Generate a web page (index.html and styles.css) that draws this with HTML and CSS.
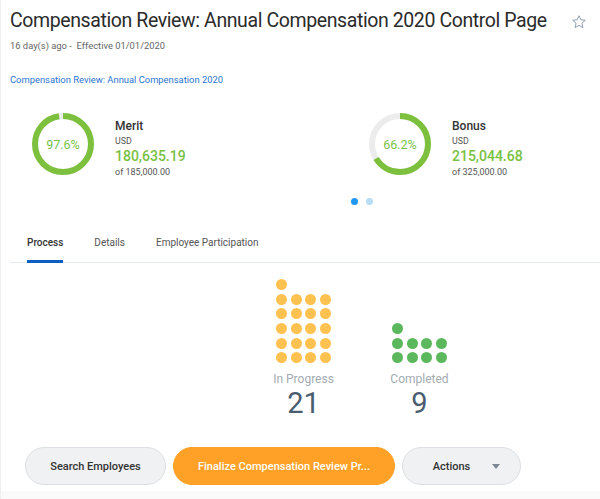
FILE: index.html
```html
<!DOCTYPE html>
<html lang="en">
<head>
<meta charset="utf-8">
<title>Compensation Review: Annual Compensation 2020 Control Page</title>
<link rel="stylesheet" href="styles.css">
</head>
<body>
<div class="page">
  <header class="head">
    <h1 class="title">Compensation Review: Annual Compensation 2020 Control Page</h1>
    <svg class="star" viewBox="0 0 24 24" width="16" height="16" aria-label="Favorite">
      <path d="M12 2.6l2.75 6.06 6.62.68-4.95 4.46 1.4 6.52L12 17l-5.82 3.32 1.4-6.52-4.95-4.46 6.62-.68z" fill="none" stroke="#8797a8" stroke-width="1.4" stroke-linejoin="round"/>
    </svg>
  </header>
  <p class="meta">16 day(s) ago -&nbsp; Effective 01/01/2020</p>
  <a class="link" href="#">Compensation Review: Annual Compensation 2020</a>

  <section class="summary">
    <div class="card">
      <div class="ring">
        <svg viewBox="0 0 62 62" width="62" height="62">
          <circle cx="31" cy="31" r="28" class="track"/>
          <circle cx="31" cy="31" r="28" class="bar" stroke-dasharray="171.7 175.9"/>
        </svg>
        <span class="pct">97.6%</span>
      </div>
      <div class="info">
        <div class="name">Merit</div>
        <div class="cur">USD</div>
        <div class="amt">180,635.19</div>
        <div class="of">of 185,000.00</div>
      </div>
    </div>
    <div class="card">
      <div class="ring">
        <svg viewBox="0 0 62 62" width="62" height="62">
          <circle cx="31" cy="31" r="28" class="track"/>
          <circle cx="31" cy="31" r="28" class="bar" stroke-dasharray="116.5 175.9"/>
        </svg>
        <span class="pct">66.2%</span>
      </div>
      <div class="info">
        <div class="name">Bonus</div>
        <div class="cur">USD</div>
        <div class="amt">215,044.68</div>
        <div class="of">of 325,000.00</div>
      </div>
    </div>
  </section>

  <div class="pager">
    <span class="dot on"></span>
    <span class="dot"></span>
  </div>

  <nav class="tabs">
    <a class="tab active" href="#">Process</a>
    <a class="tab" href="#">Details</a>
    <a class="tab" href="#">Employee Participation</a>
  </nav>

  <section class="chart">
    <div class="col">
      <div class="grid progress">
        <i></i>
        <i></i><i></i><i></i><i></i>
        <i></i><i></i><i></i><i></i>
        <i></i><i></i><i></i><i></i>
        <i></i><i></i><i></i><i></i>
        <i></i><i></i><i></i><i></i>
      </div>
      <div class="label">In Progress</div>
      <div class="count">21</div>
    </div>
    <div class="col">
      <div class="grid done">
        <i></i>
        <i></i><i></i><i></i><i></i>
        <i></i><i></i><i></i><i></i>
      </div>
      <div class="label">Completed</div>
      <div class="count">9</div>
    </div>
  </section>

  <div class="actions">
    <button class="btn grey search">Search Employees</button>
    <button class="btn primary finalize">Finalize Compensation Review Pr...</button>
    <button class="btn grey menu">Actions <span class="caret"></span></button>
  </div>
</div>
<div class="foot"></div>
</body>
</html>
```
FILE: styles.css
```css
html, body {
  margin: 0;
  overflow: hidden;
  background: #fff;
}

body {
  font-family: Roboto, "Noto Sans", Arial, sans-serif;
  color: #333;
  border-left: 1px solid #eceef0;
  height: 499px;
  box-sizing: border-box;
  position: relative;
}

.page {
  width: 703px;
  padding: 8px 0 0 9px;
}

/* header */
.head {
  display: flex;
  align-items: center;
  gap: 24px;
}

.title {
  margin: 0;
  font-size: 19.5px;
  letter-spacing: -0.4px;
  font-weight: 400;
  line-height: 26px;
  color: #2b2b2b;
  white-space: nowrap;
}

.star {
  flex: none;
  margin-top: 2px;
}

.meta {
  margin: 5px 0 0;
  font-size: 9.4px;
  line-height: 14px;
  color: #666;
}

.link {
  display: block;
  margin-top: 20px;
  font-size: 9.4px;
  line-height: 14px;
  color: #2b74d0;
  text-decoration: none;
}

/* summary cards */
.summary {
  display: grid;
  grid-template-columns: 337px 1fr;
  padding: 26px 0 0 22px;
}

.card {
  display: flex;
  align-items: flex-start;
  gap: 21px;
}

.ring {
  position: relative;
  width: 62px;
  height: 62px;
  flex: none;
}

.ring svg {
  display: block;
  transform: rotate(-90deg);
}

.track {
  fill: none;
  stroke: #ececec;
  stroke-width: 6;
}

.bar {
  fill: none;
  stroke: #7cc03e;
  stroke-width: 6;
}

.pct {
  position: absolute;
  inset: 0;
  display: flex;
  align-items: center;
  justify-content: center;
  font-size: 12.5px;
  color: #7cc24a;
}

.info {
  padding-top: 5px;
}

.name {
  font-size: 12px;
  font-weight: 500;
  line-height: 16px;
  color: #333;
}

.cur {
  font-size: 8.8px;
  line-height: 14px;
  color: #555;
}

.amt {
  font-size: 14px;
  font-weight: 500;
  line-height: 17px;
  color: #79c142;
}

.of {
  font-size: 9px;
  line-height: 14px;
  color: #555;
}

/* carousel pager */
.pager {
  display: flex;
  justify-content: center;
  gap: 8px;
  margin-top: 19px;
}

.dot {
  width: 7px;
  height: 7px;
  border-radius: 50%;
  background: #b7dcf7;
}

.dot.on {
  background: #2196f3;
}

/* tabs */
.tabs {
  display: flex;
  gap: 31px;
  margin-top: 31px;
  padding-left: 17px;
  border-bottom: 1px solid #e4e9ee;
}

.tab {
  font-size: 10px;
  line-height: 14px;
  color: #555;
  text-decoration: none;
  padding-bottom: 10px;
  border-bottom: 3px solid transparent;
  margin-bottom: -1px;
}

.tab.active {
  color: #333;
  font-weight: 500;
  border-bottom-color: #0b5fc1;
}

/* status chart */
.chart {
  display: flex;
  justify-content: center;
  align-items: flex-end;
  gap: 36px;
  margin-top: 16px;
}

.col {
  width: 80px;
  display: flex;
  flex-direction: column;
  align-items: center;
}

.grid {
  display: grid;
  grid-template-columns: repeat(4, 11px);
  gap: 3.7px;
}

.grid i {
  width: 11px;
  height: 11px;
  border-radius: 50%;
}

.grid i:first-child {
  grid-column: 1 / span 4;
}

.progress i {
  background: #ffc14f;
}

.done i {
  background: #5cb85c;
}

.label {
  margin-top: 9px;
  font-size: 12px;
  line-height: 15px;
  color: #a3abb3;
}

.count {
  font-size: 29px;
  line-height: 32px;
  color: #4a5d70;
}

/* buttons */
.actions {
  display: flex;
  gap: 7px;
  margin-top: 28px;
  padding-left: 15px;
}

.btn {
  height: 38px;
  border-radius: 19px;
  font-family: inherit;
  font-size: 11px;
  font-weight: 500;
  padding: 0;
  cursor: pointer;
}

.grey {
  background: #f0f1f2;
  border: 1px solid #dce0e4;
  color: #333;
}

.primary {
  background: #ffa126;
  border: 1px solid #ffa126;
  color: #fff;
}

.search {
  width: 141px;
}

.finalize {
  width: 222px;
}

.menu {
  width: 119px;
  display: flex;
  align-items: center;
  justify-content: center;
  gap: 22px;
  padding-left: 10px;
}

.caret {
  width: 0;
  height: 0;
  border-left: 4px solid transparent;
  border-right: 4px solid transparent;
  border-top: 5px solid #7b8794;
}

.foot {
  position: absolute;
  left: 0;
  right: 0;
  bottom: 0;
  height: 8px;
  background: #fafafa;
}
```
